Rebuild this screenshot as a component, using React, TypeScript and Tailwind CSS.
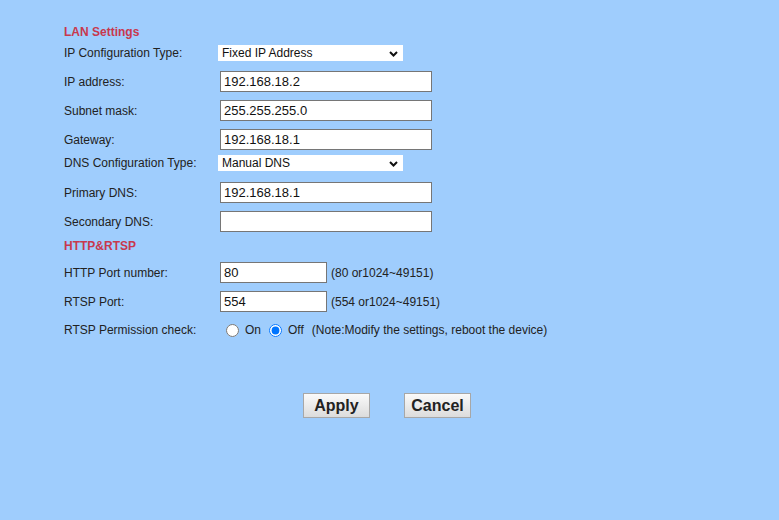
import React from "react";

const Chevron = () => (
  <svg
    className="pointer-events-none absolute right-[5px] top-[6px]"
    width="9"
    height="6"
    viewBox="0 0 9 6"
  >
    <path d="M1 1 L4.5 4.5 L8 1" fill="none" stroke="#111" strokeWidth="2" />
  </svg>
);

function Select({ value, options }: { value: string; options: string[] }) {
  return (
    <div className="relative h-[16px] w-[185px] overflow-hidden bg-white">
      <select
        defaultValue={value}
        className="block h-[16px] min-h-0 w-full appearance-none border-0 bg-white py-0 pl-[4px] text-[12px] leading-[16px] text-[#111] outline-none"
      >
        {options.map((o) => (
          <option key={o}>{o}</option>
        ))}
      </select>
      <Chevron />
    </div>
  );
}

function TextInput({ value, w = 212 }: { value: string; w?: number }) {
  return (
    <input
      defaultValue={value}
      className={`${w === 212 ? "w-[212px]" : "w-[107px]"} ml-[2px] h-[21px] border border-[#767676] bg-white px-[3px] text-[13px] text-[#111] outline-none`}
    />
  );
}

function Label({ children }: { children: React.ReactNode }) {
  return <div className="w-[154px] shrink-0 text-[12px] text-[#222]">{children}</div>;
}

export default function App() {
  return (
    <div
      className="h-[520px] w-full bg-[#9fcdfd] pl-[64px] pt-[24px] text-[#222]"
      style={{ fontFamily: '"Liberation Sans", Arial, sans-serif' }}
    >
      <div className="flex h-[16px] items-center text-[12px] font-bold text-[#c8384d]">LAN Settings</div>

      <div className="mt-[5px] flex h-[16px] items-center">
        <Label>IP Configuration Type:</Label>
        <Select value="Fixed IP Address" options={["Fixed IP Address", "DHCP"]} />
      </div>

      <div className="mt-[10px] flex h-[21px] items-center">
        <Label>IP address:</Label>
        <TextInput value="192.168.18.2" />
      </div>
      <div className="mt-[8px] flex h-[21px] items-center">
        <Label>Subnet mask:</Label>
        <TextInput value="255.255.255.0" />
      </div>
      <div className="mt-[8px] flex h-[21px] items-center">
        <Label>Gateway:</Label>
        <TextInput value="192.168.18.1" />
      </div>

      <div className="mt-[5px] flex h-[16px] items-center">
        <Label>DNS Configuration Type:</Label>
        <Select value="Manual DNS" options={["Manual DNS", "Auto DNS"]} />
      </div>

      <div className="mt-[11px] flex h-[21px] items-center">
        <Label>Primary DNS:</Label>
        <TextInput value="192.168.18.1" />
      </div>
      <div className="mt-[8px] flex h-[21px] items-center">
        <Label>Secondary DNS:</Label>
        <TextInput value="" />
      </div>

      <div className="mt-[6px] flex h-[16px] items-center text-[12px] font-bold text-[#c8384d]">HTTP&amp;RTSP</div>

      <div className="mt-[8px] flex h-[21px] items-center">
        <Label>HTTP Port number:</Label>
        <TextInput value="80" w={107} />
        <span className="ml-[4px] text-[12px]">(80 or1024~49151)</span>
      </div>
      <div className="mt-[8px] flex h-[21px] items-center">
        <Label>RTSP Port:</Label>
        <TextInput value="554" w={107} />
        <span className="ml-[4px] text-[12px]">(554 or1024~49151)</span>
      </div>

      <div className="mt-[10px] flex h-[16px] items-center text-[12px]">
        <Label>RTSP Permission check:</Label>
        <label className="ml-[8px] flex items-center">
          <input type="radio" name="rtsp" className="m-0 h-[13px] w-[13px]" />
          <span className="ml-[6px]">On</span>
        </label>
        <label className="ml-[8px] flex items-center">
          <input type="radio" name="rtsp" defaultChecked className="m-0 h-[13px] w-[13px]" />
          <span className="ml-[6px]">Off</span>
        </label>
        <span className="ml-[8px]">(Note:Modify the settings, reboot the device)</span>
      </div>

      <div className="-ml-[64px] mt-[55px] flex justify-center gap-[34px] pr-[5px]">
        <button className="h-[25px] w-[67px] border border-[#a7a7a7] bg-gradient-to-b from-[#fafafa] to-[#dcdcdc] text-[16px] font-bold text-[#222]">
          Apply
        </button>
        <button className="h-[25px] w-[67px] border border-[#a7a7a7] bg-gradient-to-b from-[#fafafa] to-[#dcdcdc] text-[16px] font-bold text-[#222]">
          Cancel
        </button>
      </div>
    </div>
  );
}
